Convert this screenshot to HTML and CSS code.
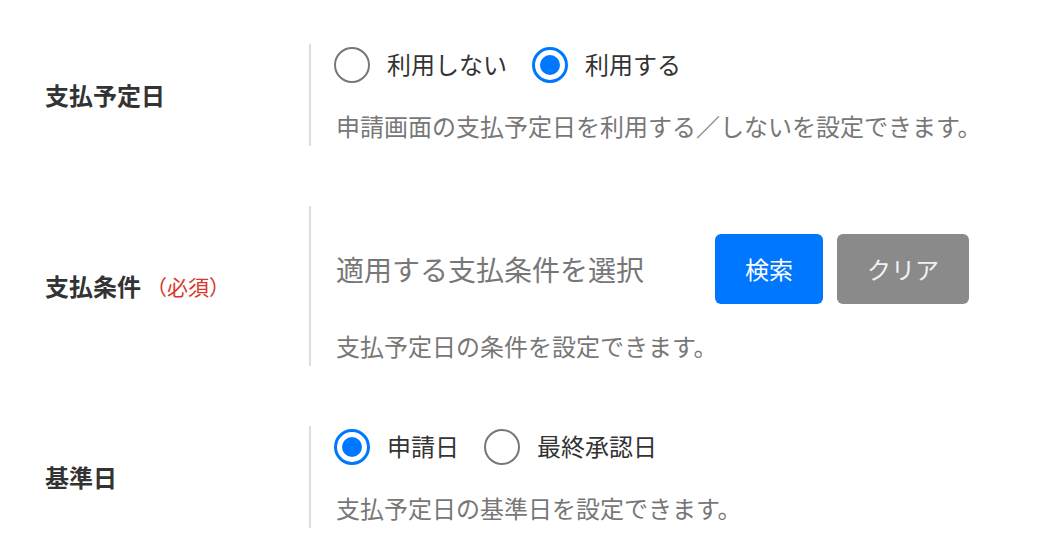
FILE: index.html
```html
<!doctype html>
<html lang="ja">
<head>
    <meta charset="utf-8">
    <title>支払予定日設定</title>
    <link rel="stylesheet" href="styles.css">
</head>
<body>
    <div class="form">
        <div class="row">
            <div class="row-label">支払予定日</div>
            <div class="row-body">
                <div class="radios">
                    <label class="radio"><span class="mark"></span><span class="radio-text">利用しない</span></label>
                    <label class="radio"><span class="mark checked"></span><span class="radio-text">利用する</span></label>
                </div>
                <p class="note">申請画面の支払予定日を利用する／しないを設定できます。</p>
            </div>
        </div>

        <div class="row">
            <div class="row-label">支払条件<span class="required">（必須）</span></div>
            <div class="row-body">
                <div class="picker">
                    <span class="picker-text">適用する支払条件を選択</span>
                    <span class="button search">検索</span>
                    <span class="button clear">クリア</span>
                </div>
                <p class="note">支払予定日の条件を設定できます。</p>
            </div>
        </div>

        <div class="row">
            <div class="row-label">基準日</div>
            <div class="row-body">
                <div class="radios">
                    <label class="radio"><span class="mark checked"></span><span class="radio-text">申請日</span></label>
                    <label class="radio"><span class="mark"></span><span class="radio-text">最終承認日</span></label>
                </div>
                <p class="note">支払予定日の基準日を設定できます。</p>
            </div>
        </div>
    </div>
</body>
</html>
```

FILE: styles.css
```css
* {
    padding: 0;
    margin: 0;
    box-sizing: border-box;
}
body {
    font-family: "Noto Sans CJK JP", "Noto Sans", sans-serif;
    font-size: 24px;
    color: #333333;
    background: #ffffff;
}
.form {
    padding-top: 44px;
}
.row {
    display: flex;
    margin-bottom: 60px;
}
.row-label {
    width: 309px;
    padding-left: 45px;
    display: flex;
    align-items: center;
    font-weight: bold;
    line-height: 36px;
}
.required {
    font-weight: normal;
    font-size: 21px;
    color: #d8372c;
    margin-left: 5px;
}
.row-body {
    border-left: 2px solid #dddddd;
    padding-left: 25px;
}
.radios {
    display: flex;
    align-items: center;
    height: 42px;
    margin-left: -2px;
}
.radio {
    display: flex;
    align-items: center;
    margin-right: 25px;
    line-height: 36px;
}
.radio-text {
    padding-bottom: 3px;
}
.mark {
    width: 36px;
    height: 36px;
    border: 2px solid #777777;
    border-radius: 50%;
    margin-right: 17px;
    display: flex;
    align-items: center;
    justify-content: center;
}
.mark.checked {
    border: 3px solid #0077ff;
}
.mark.checked::after {
    content: "";
    width: 20px;
    height: 20px;
    border-radius: 50%;
    background: #0077ff;
}
.note {
    margin-top: 22px;
    padding-bottom: 2px;
    line-height: 36px;
    color: #777777;
}
.picker {
    display: flex;
    align-items: center;
    padding: 28px 0 2px;
}
.picker-text {
    width: 379px;
    font-size: 28px;
    color: #777777;
}
.button {
    height: 70px;
    line-height: 70px;
    padding: 0 30px;
    border-radius: 6px;
    margin-right: 14px;
}
.search {
    background: #0077ff;
    color: #ffffff;
}
.clear {
    background: #8a8a8a;
    color: #f2f2f2;
}
```
